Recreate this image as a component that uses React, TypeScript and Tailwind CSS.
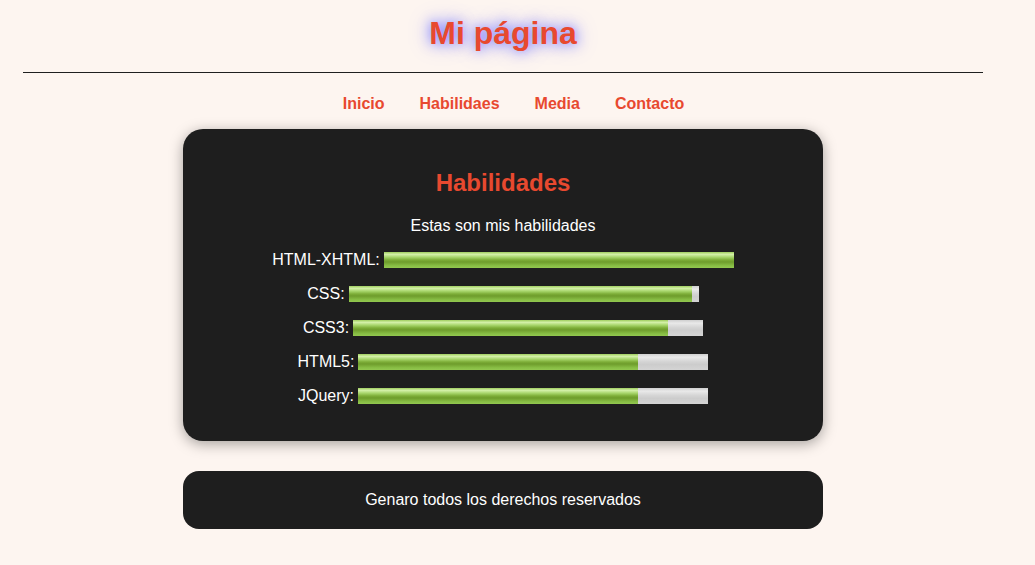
const skills = [
  { name: 'HTML-XHTML', value: 100 },
  { name: 'CSS', value: 98 },
  { name: 'CSS3', value: 90 },
  { name: 'HTML5', value: 80 },
  { name: 'JQuery', value: 80 },
];

const links = ['Inicio', 'Habilidaes', 'Media', 'Contacto'];

function SkillBar({ name, value }: { name: string; value: number }) {
  return (
    <div className="flex h-[34px] items-center justify-center gap-[4px]">
      <span className="text-[16px] leading-[18px] text-white">{name}:</span>
      <div className="h-[16px] w-[350px] bg-[linear-gradient(to_bottom,#cfcfcf_0%,#e9e9e9_20%,#d6d6d6_45%,#cccccc_65%,#d4d4d4_100%)]">
        <div
          className="h-full bg-[linear-gradient(to_bottom,#9fcd5e_0%,#d3f0a8_15%,#a8d66c_32%,#7cad37_50%,#6e9c2c_62%,#87bd44_85%,#92c74f_100%)]"
          style={{ width: `${value}%` }}
        />
      </div>
    </div>
  );
}

export default function App() {
  return (
    <div className="min-h-screen bg-[#fdf5f0] font-['Liberation_Sans',Arial,sans-serif]">
      <div className="ml-[23px] w-[960px]">
        {/* Header */}
        <h1 className="pt-[15px] text-center text-[32px] font-bold leading-[37px] text-[#e8492f] [text-shadow:0_0_12px_#7a7aff,0_0_22px_#a0a0ff]">
          Mi página
        </h1>
        <hr className="mt-[20px] border-0 border-t border-[#1f1f1f]" />

        {/* Nav */}
        <nav className="mt-[22px] mb-[16px] flex justify-center gap-[35px] pl-[21px]">
          {links.map((l) => (
            <a key={l} href="#" className="text-[16px] font-bold leading-[18px] text-[#e8492f]">
              {l}
            </a>
          ))}
        </nav>

        {/* Skills card */}
        <section className="mx-auto w-[640px] rounded-[20px] bg-[#1e1e1e] pt-[40px] pb-[28px] shadow-[0_3px_14px_rgba(0,0,0,0.35)]">
          <h2 className="text-center text-[24px] font-bold leading-[28px] text-[#e8492f]">Habilidades</h2>
          <p className="mt-[20px] mb-[8px] text-center text-[16px] leading-[18px] text-white">
            Estas son mis habilidades
          </p>
          {skills.map((s) => (
            <SkillBar key={s.name} name={s.name} value={s.value} />
          ))}
        </section>

        {/* Footer */}
        <footer className="mx-auto mt-[30px] flex h-[58px] w-[640px] items-center justify-center rounded-[16px] bg-[#1e1e1e]">
          <p className="text-[16px] leading-[18px] text-white">Genaro todos los derechos reservados</p>
        </footer>
      </div>
    </div>
  );
}
